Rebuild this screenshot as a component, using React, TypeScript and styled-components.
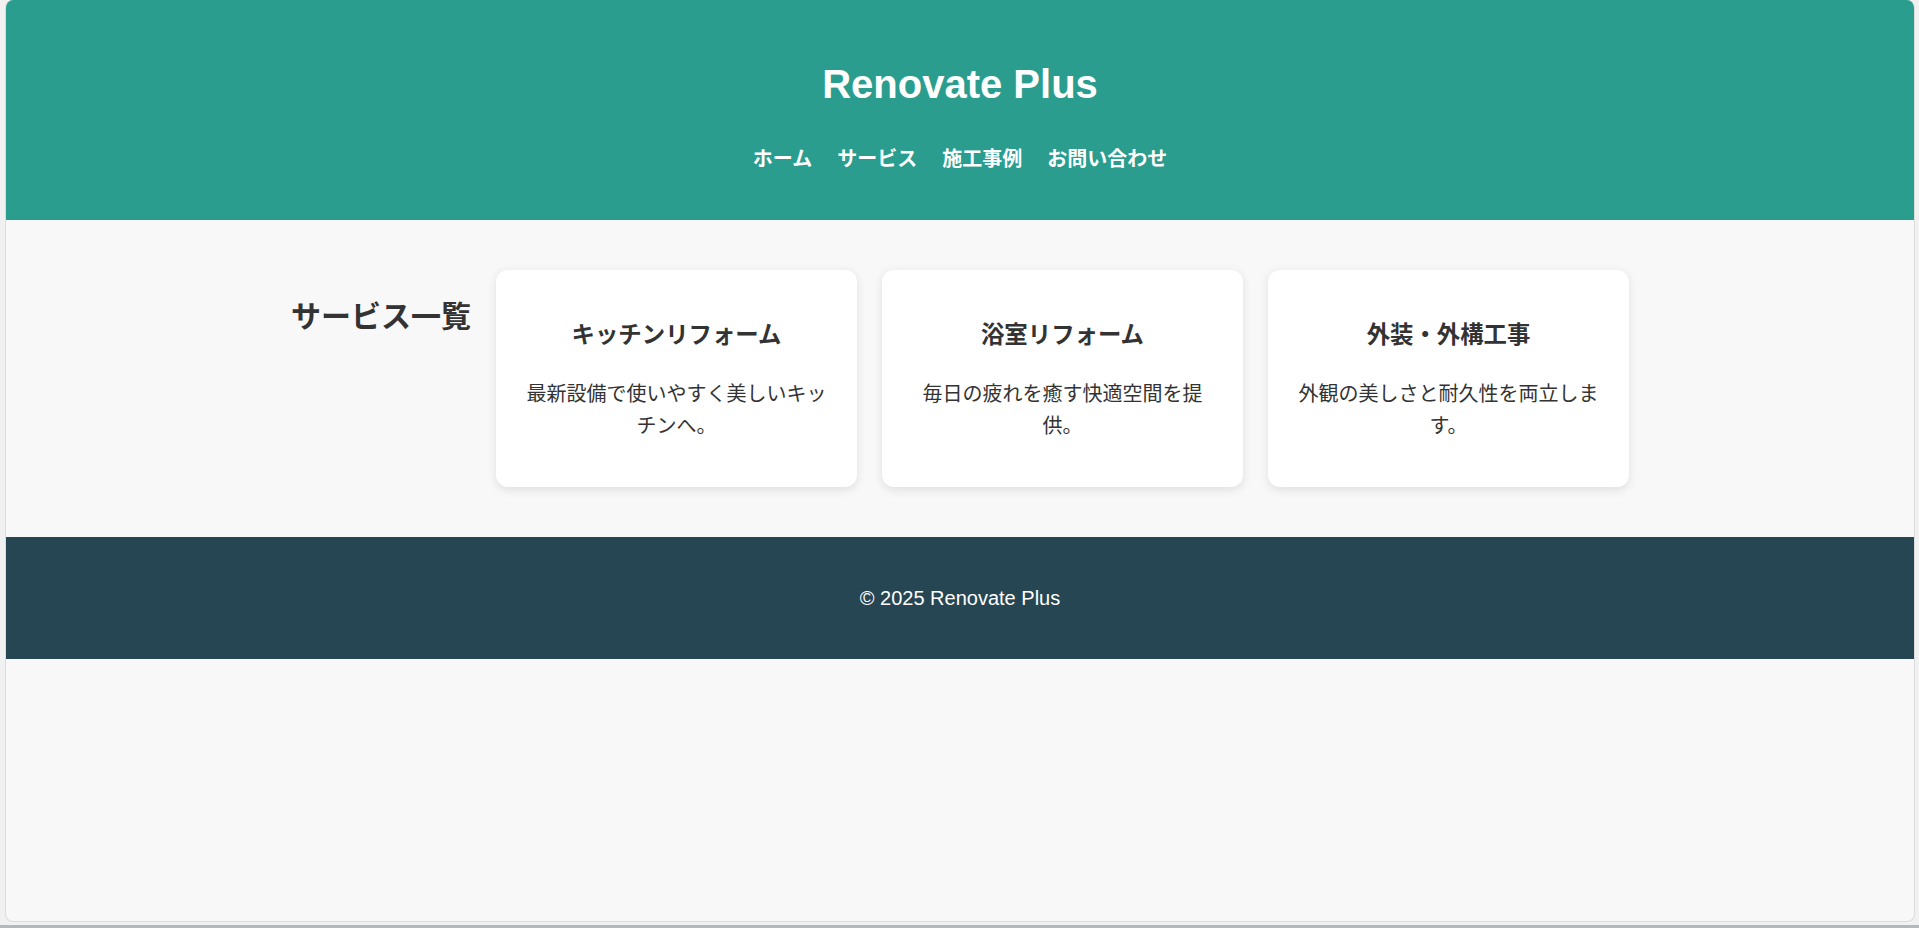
import React from "react";
import styled, { createGlobalStyle } from "styled-components";

const GlobalStyle = createGlobalStyle`
  html, body {
    margin: 0;
    padding: 0;
    height: 100%;
    background-color: #f1f1f1;
    font-family: "Liberation Sans", Arial, "Noto Sans CJK JP", sans-serif;
    color: #333;
    line-height: 1.6;
  }
  * {
    box-sizing: border-box;
  }
`;

const Screen = styled.div`
  height: 928px;
  display: flex;
  flex-direction: column;
  padding: 0 4px 0 5px;
  overflow: hidden;
`;

const Window = styled.div`
  height: 922px;
  display: flex;
  flex-direction: column;
  background-color: #f8f8f8;
  border: 1px solid #dcdcdc;
  border-top: none;
  border-radius: 8px;
  overflow: hidden;
`;

const BottomEdge = styled.div`
  margin: 3px -4px 0 -5px;
  height: 3px;
  background-color: #b4b8bc;
`;

const Header = styled.header`
  background-color: #2a9d8f;
  color: #fff;
  text-align: center;
  padding: 25px 0;
`;

const Title = styled.h1`
  margin: 26.8px 0;
  font-size: 40px;
  line-height: 64px;
  font-weight: bold;
`;

const Nav = styled.nav`
  display: flex;
  justify-content: center;
  gap: 25px;
  margin: 0 0 20px;
  padding: 0;
  list-style: none;
`;

const NavLink = styled.a`
  color: #fff;
  text-decoration: none;
  font-weight: bold;
  font-size: 20px;
  line-height: 32px;
`;

const Main = styled.main`
  display: flex;
  justify-content: center;
  align-items: flex-start;
  gap: 25px;
  padding: 50px 0;
`;

const SectionTitle = styled.h2`
  margin: 25px 0 0;
  font-size: 30px;
  line-height: 43px;
  font-weight: bold;
  color: #333;
`;

const Card = styled.div`
  width: 361px;
  background-color: #fff;
  border-radius: 12px;
  padding: 25px;
  text-align: center;
  box-shadow: 0 2.5px 10px rgba(0, 0, 0, 0.1);
`;

const CardTitle = styled.h3`
  margin: 23.4px 0;
  font-size: 23.4px;
  line-height: 34px;
  font-weight: bold;
  color: #333;
`;

const CardText = styled.p`
  margin: 0 0 20px;
  padding-top: 3px;
  font-size: 20px;
  line-height: 32px;
  color: #333;
`;

const Footer = styled.footer`
  background-color: #264653;
  color: #fff;
  text-align: center;
  padding: 25px 0;
`;

const FooterText = styled.p`
  margin: 20px 0;
  font-size: 20px;
  line-height: 32px;
`;

const navItems = ["ホーム", "サービス", "施工事例", "お問い合わせ"];

const services = [
  { title: "キッチンリフォーム", text: "最新設備で使いやすく美しいキッチンへ。" },
  { title: "浴室リフォーム", text: "毎日の疲れを癒す快適空間を提供。" },
  { title: "外装・外構工事", text: "外観の美しさと耐久性を両立します。" },
];

const App: React.FC = () => {
  return (
    <>
      <GlobalStyle />
      <Screen>
        <Window>
          <Header>
            <Title>Renovate Plus</Title>
            <Nav>
              {navItems.map((item) => (
                <NavLink key={item} href="#">
                  {item}
                </NavLink>
              ))}
            </Nav>
          </Header>
          <Main>
            <SectionTitle>サービス一覧</SectionTitle>
            {services.map((s) => (
              <Card key={s.title}>
                <CardTitle>{s.title}</CardTitle>
                <CardText>{s.text}</CardText>
              </Card>
            ))}
          </Main>
          <Footer>
            <FooterText>© 2025 Renovate Plus</FooterText>
          </Footer>
        </Window>
        <BottomEdge />
      </Screen>
    </>
  );
};

export default App;
